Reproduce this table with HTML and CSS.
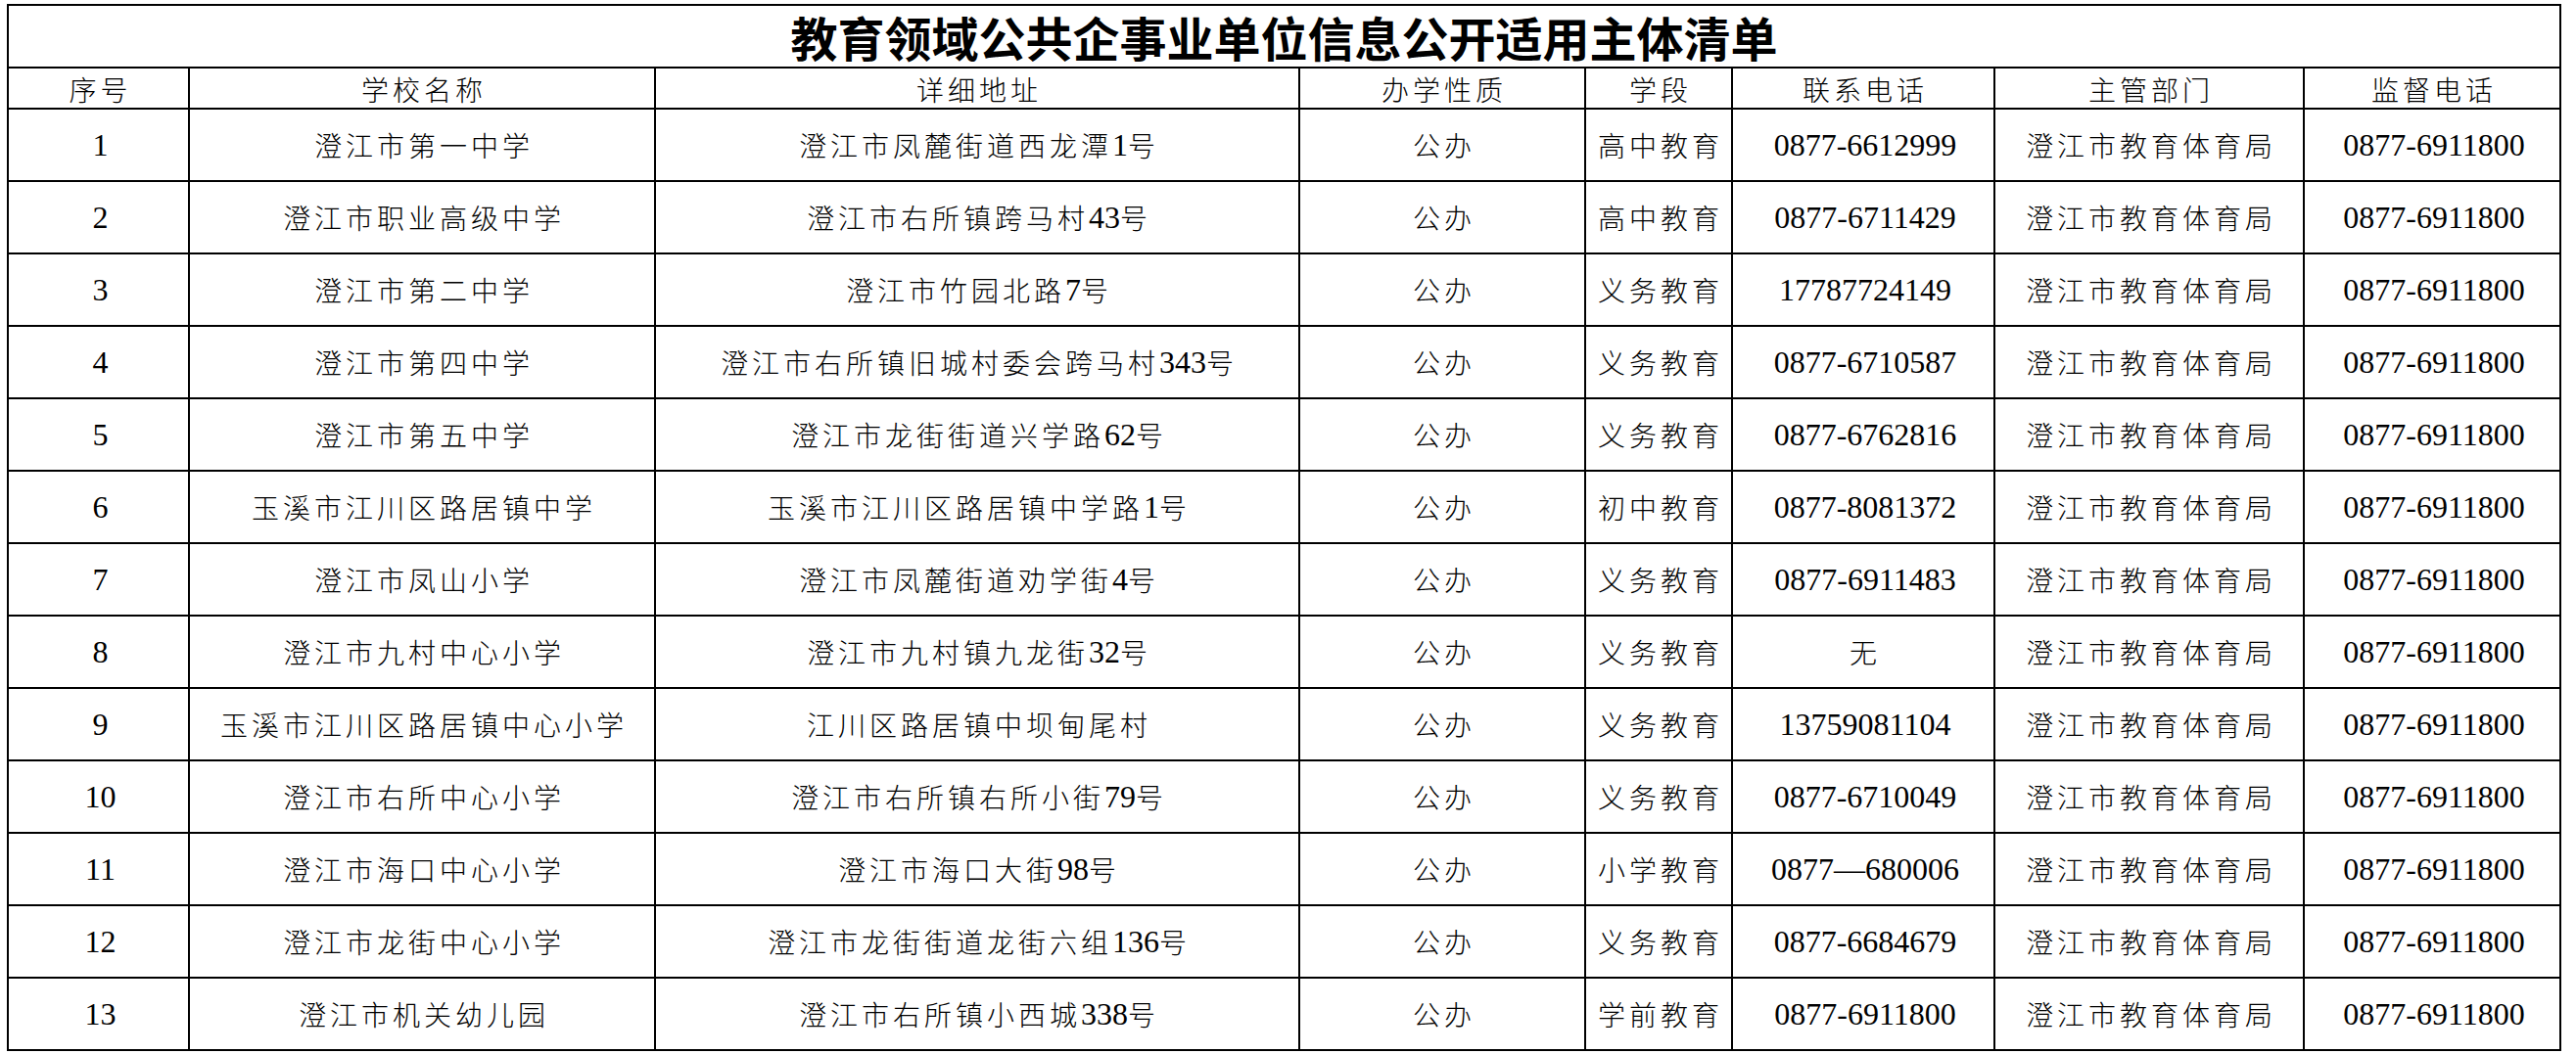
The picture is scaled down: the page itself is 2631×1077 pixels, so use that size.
FILE: index.html
```html
<!DOCTYPE html>
<html lang="zh-CN">
<head>
<meta charset="utf-8">
<title>教育领域公共企事业单位信息公开适用主体清单</title>
<link rel="stylesheet" href="styles.css">
</head>
<body>
<div class="sheet">
  <div class="cell title">教育领域公共企事业单位信息公开适用主体清单</div>

  <div class="cell head">序号</div>
  <div class="cell head">学校名称</div>
  <div class="cell head">详细地址</div>
  <div class="cell head">办学性质</div>
  <div class="cell head">学段</div>
  <div class="cell head">联系电话</div>
  <div class="cell head">主管部门</div>
  <div class="cell head">监督电话</div>

  <div class="cell"><span class="n">1</span></div>
  <div class="cell">澄江市第一中学</div>
  <div class="cell">澄江市凤麓街道西龙潭<span class="n">1</span>号</div>
  <div class="cell">公办</div>
  <div class="cell">高中教育</div>
  <div class="cell"><span class="n">0877-6612999</span></div>
  <div class="cell">澄江市教育体育局</div>
  <div class="cell"><span class="n">0877-6911800</span></div>

  <div class="cell"><span class="n">2</span></div>
  <div class="cell">澄江市职业高级中学</div>
  <div class="cell">澄江市右所镇跨马村<span class="n">43</span>号</div>
  <div class="cell">公办</div>
  <div class="cell">高中教育</div>
  <div class="cell"><span class="n">0877-6711429</span></div>
  <div class="cell">澄江市教育体育局</div>
  <div class="cell"><span class="n">0877-6911800</span></div>

  <div class="cell"><span class="n">3</span></div>
  <div class="cell">澄江市第二中学</div>
  <div class="cell">澄江市竹园北路<span class="n">7</span>号</div>
  <div class="cell">公办</div>
  <div class="cell">义务教育</div>
  <div class="cell"><span class="n">17787724149</span></div>
  <div class="cell">澄江市教育体育局</div>
  <div class="cell"><span class="n">0877-6911800</span></div>

  <div class="cell"><span class="n">4</span></div>
  <div class="cell">澄江市第四中学</div>
  <div class="cell">澄江市右所镇旧城村委会跨马村<span class="n">343</span>号</div>
  <div class="cell">公办</div>
  <div class="cell">义务教育</div>
  <div class="cell"><span class="n">0877-6710587</span></div>
  <div class="cell">澄江市教育体育局</div>
  <div class="cell"><span class="n">0877-6911800</span></div>

  <div class="cell"><span class="n">5</span></div>
  <div class="cell">澄江市第五中学</div>
  <div class="cell">澄江市龙街街道兴学路<span class="n">62</span>号</div>
  <div class="cell">公办</div>
  <div class="cell">义务教育</div>
  <div class="cell"><span class="n">0877-6762816</span></div>
  <div class="cell">澄江市教育体育局</div>
  <div class="cell"><span class="n">0877-6911800</span></div>

  <div class="cell"><span class="n">6</span></div>
  <div class="cell">玉溪市江川区路居镇中学</div>
  <div class="cell">玉溪市江川区路居镇中学路<span class="n">1</span>号</div>
  <div class="cell">公办</div>
  <div class="cell">初中教育</div>
  <div class="cell"><span class="n">0877-8081372</span></div>
  <div class="cell">澄江市教育体育局</div>
  <div class="cell"><span class="n">0877-6911800</span></div>

  <div class="cell"><span class="n">7</span></div>
  <div class="cell">澄江市凤山小学</div>
  <div class="cell">澄江市凤麓街道劝学街<span class="n">4</span>号</div>
  <div class="cell">公办</div>
  <div class="cell">义务教育</div>
  <div class="cell"><span class="n">0877-6911483</span></div>
  <div class="cell">澄江市教育体育局</div>
  <div class="cell"><span class="n">0877-6911800</span></div>

  <div class="cell"><span class="n">8</span></div>
  <div class="cell">澄江市九村中心小学</div>
  <div class="cell">澄江市九村镇九龙街<span class="n">32</span>号</div>
  <div class="cell">公办</div>
  <div class="cell">义务教育</div>
  <div class="cell">无</div>
  <div class="cell">澄江市教育体育局</div>
  <div class="cell"><span class="n">0877-6911800</span></div>

  <div class="cell"><span class="n">9</span></div>
  <div class="cell">玉溪市江川区路居镇中心小学</div>
  <div class="cell">江川区路居镇中坝甸尾村</div>
  <div class="cell">公办</div>
  <div class="cell">义务教育</div>
  <div class="cell"><span class="n">13759081104</span></div>
  <div class="cell">澄江市教育体育局</div>
  <div class="cell"><span class="n">0877-6911800</span></div>

  <div class="cell"><span class="n">10</span></div>
  <div class="cell">澄江市右所中心小学</div>
  <div class="cell">澄江市右所镇右所小街<span class="n">79</span>号</div>
  <div class="cell">公办</div>
  <div class="cell">义务教育</div>
  <div class="cell"><span class="n">0877-6710049</span></div>
  <div class="cell">澄江市教育体育局</div>
  <div class="cell"><span class="n">0877-6911800</span></div>

  <div class="cell"><span class="n">11</span></div>
  <div class="cell">澄江市海口中心小学</div>
  <div class="cell">澄江市海口大街<span class="n">98</span>号</div>
  <div class="cell">公办</div>
  <div class="cell">小学教育</div>
  <div class="cell"><span class="n">0877—680006</span></div>
  <div class="cell">澄江市教育体育局</div>
  <div class="cell"><span class="n">0877-6911800</span></div>

  <div class="cell"><span class="n">12</span></div>
  <div class="cell">澄江市龙街中心小学</div>
  <div class="cell">澄江市龙街街道龙街六组<span class="n">136</span>号</div>
  <div class="cell">公办</div>
  <div class="cell">义务教育</div>
  <div class="cell"><span class="n">0877-6684679</span></div>
  <div class="cell">澄江市教育体育局</div>
  <div class="cell"><span class="n">0877-6911800</span></div>

  <div class="cell"><span class="n">13</span></div>
  <div class="cell">澄江市机关幼儿园</div>
  <div class="cell">澄江市右所镇小西城<span class="n">338</span>号</div>
  <div class="cell">公办</div>
  <div class="cell">学前教育</div>
  <div class="cell"><span class="n">0877-6911800</span></div>
  <div class="cell">澄江市教育体育局</div>
  <div class="cell"><span class="n">0877-6911800</span></div>
</div>
</body>
</html>
```

FILE: styles.css
```css
html, body {
  margin: 0;
  background: #ffffff;
}

body {
  padding: 4px 0 0 7px;
  color: #000000;
  font-family: "Noto Sans CJK SC", sans-serif;
}

.sheet {
  display: grid;
  grid-template-columns: 185px 476px 658px 292px 150px 268px 316px 262px;
  grid-template-rows: 64px 42px repeat(13, 74px);
  width: max-content;
  border-left: 2px solid #000000;
  border-top: 2px solid #000000;
}

.cell {
  box-sizing: border-box;
  border-right: 2px solid #000000;
  border-bottom: 2px solid #000000;
  display: flex;
  align-items: center;
  justify-content: center;
  padding-left: 4px;
  font-size: 28px;
  font-weight: 300;
  letter-spacing: 4px;
  line-height: 1;
  white-space: nowrap;
}

.title {
  grid-column: 1 / -1;
  padding-left: 0;
  font-size: 48px;
  font-weight: 700;
  letter-spacing: 0;
}

.head {
  padding-top: 1px;
}

.n {
  font-family: "Liberation Serif", serif;
  font-size: 32px;
  font-weight: 400;
  letter-spacing: 0;
}
```
